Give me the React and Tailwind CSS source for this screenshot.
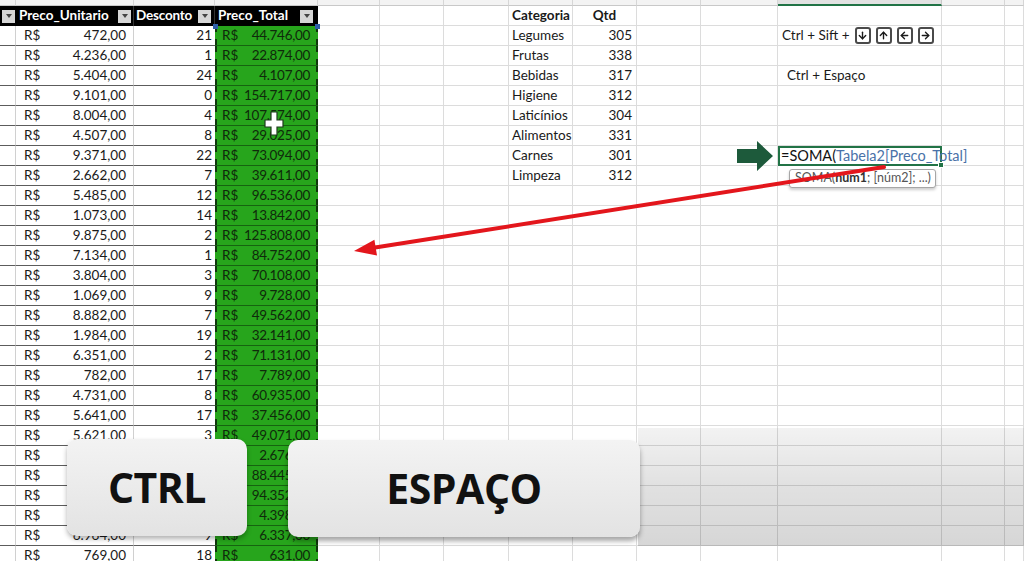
import React from "react";
import { ArrowDown, ArrowUp, ArrowLeft, ArrowRight } from "lucide-react";

const COLS =
  "grid grid-cols-[16px_118px_81px_103px_62px_64px_65px_64px_64px_64px_77px_164px_63px_19px] h-[20px]";

const rows = [
  ["472,00", "21", "44.746,00"],
  ["4.236,00", "1", "22.874,00"],
  ["5.404,00", "24", "4.107,00"],
  ["9.101,00", "0", "154.717,00"],
  ["8.004,00", "4", "107.574,00"],
  ["4.507,00", "8", "29.025,00"],
  ["9.371,00", "22", "73.094,00"],
  ["2.662,00", "7", "39.611,00"],
  ["5.485,00", "12", "96.536,00"],
  ["1.073,00", "14", "13.842,00"],
  ["9.875,00", "2", "125.808,00"],
  ["7.134,00", "1", "84.752,00"],
  ["3.804,00", "3", "70.108,00"],
  ["1.069,00", "9", "9.728,00"],
  ["8.882,00", "7", "49.562,00"],
  ["1.984,00", "19", "32.141,00"],
  ["6.351,00", "2", "71.131,00"],
  ["782,00", "17", "7.789,00"],
  ["4.731,00", "8", "60.935,00"],
  ["5.641,00", "17", "37.456,00"],
  ["5.621,00", "3", "49.071,00"],
  ["8.920,00", "11", "2.676,00"],
  ["3.358,00", "6", "88.445,00"],
  ["7.412,00", "13", "94.352,00"],
  ["2.107,00", "5", "4.398,00"],
  ["6.964,00", "9", "6.337,00"],
  ["769,00", "18", "631,00"],
];

const cats = [
  ["Legumes", "305"],
  ["Frutas", "338"],
  ["Bebidas", "317"],
  ["Higiene", "312"],
  ["Laticínios", "304"],
  ["Alimentos", "331"],
  ["Carnes", "301"],
  ["Limpeza", "312"],
];

const grid = "border-r border-b border-[#dcdcdc]";

function Filter() {
  return (
    <span className="w-[13px] h-[13px] bg-[#d6d6d6] flex items-center justify-center shrink-0">
      <span className="w-0 h-0 border-x-[3px] border-x-transparent border-t-[4px] border-t-[#444]" />
    </span>
  );
}

function Key({ children }) {
  return (
    <span className="w-[16px] h-[17px] rounded-[3px] border-2 border-[#4a4a4a] flex items-center justify-center text-[#1a1a1a]">
      {children}
    </span>
  );
}

function RightCells({ r }) {
  const cat = r === 0 ? ["Categoria", "Qtd"] : cats[r - 1];
  let lCell = null;
  if (r === 1) {
    lCell = (
      <div className={`${grid} flex items-center gap-[5px] pl-[4px] whitespace-nowrap`}>
        <span>Ctrl + Sift +</span>
        <Key><ArrowDown size={11} strokeWidth={3} /></Key>
        <Key><ArrowUp size={11} strokeWidth={3} /></Key>
        <Key><ArrowLeft size={11} strokeWidth={3} /></Key>
        <Key><ArrowRight size={11} strokeWidth={3} /></Key>
      </div>
    );
  } else if (r === 3) {
    lCell = <div className={`${grid} flex items-center pl-[9px]`}>Ctrl + Espaço</div>;
  } else if (r === 7) {
    lCell = (
      <div className="relative z-10 border-2 border-[#217346] flex items-center pl-[1px] whitespace-nowrap text-[14.5px]">
        <span className="text-[#111]">=SOMA(</span>
        <span className="text-[#4a72a8]">Tabela2[Preco_Total]</span>
        <span className="w-px h-[16px] bg-[#222] ml-[2px]" />
        <span className="absolute right-[-4px] bottom-[-4px] w-[6px] h-[6px] bg-[#217346] border border-white" />
      </div>
    );
  } else {
    lCell = <div className={grid} />;
  }
  return (
    <>
      <div className={grid} />
      <div className={grid} />
      <div className={grid} />
      {cat ? (
        <div className={`${grid} flex items-center pl-[3px] overflow-hidden whitespace-nowrap ${r === 0 ? "font-bold" : ""}`}>
          {cat[0]}
        </div>
      ) : (
        <div className={grid} />
      )}
      {cat ? (
        <div className={`${grid} flex items-center ${r === 0 ? "justify-center font-bold" : "justify-end pr-[4px]"}`}>
          {cat[1]}
        </div>
      ) : (
        <div className={grid} />
      )}
      <div className={grid} />
      <div className={grid} />
      {lCell}
      <div className={grid} />
      <div className={grid} />
    </>
  );
}

function HeaderRow() {
  return (
    <div className={COLS}>
      <div className="bg-black flex items-center justify-end pr-[1px]">
        <Filter />
      </div>
      <div className="bg-black text-white font-bold flex items-center justify-between pl-[3px] pr-[2px] border-r border-[#333]">
        <span>Preco_Unitario</span>
        <Filter />
      </div>
      <div className="bg-black text-white font-bold flex items-center justify-between pl-[2px] pr-[3px] border-r border-[#333]">
        <span className="tracking-[-0.2px]">Desconto</span>
        <Filter />
      </div>
      <div className="relative bg-black text-white font-bold flex items-center justify-between pl-[3px] pr-[5px]">
        <span>Preco_Total</span>
        <Filter />
        <span className="absolute left-[-2px] bottom-[-3px] w-[5px] h-[5px] bg-[#2f5fa8]" />
        <span className="absolute right-[-2px] bottom-[-3px] w-[5px] h-[5px] bg-[#2f5fa8]" />
      </div>
      <RightCells r={0} />
    </div>
  );
}

function DataRow({ r, d }) {
  return (
    <div className={COLS}>
      <div className="border-b border-[#5c5c5c] border-r border-r-[#d0d0d0]" />
      <div className="border-b border-[#5c5c5c] border-r border-r-[#d0d0d0] flex items-center justify-between pl-[8px] pr-[7px]">
        <span>R$</span>
        <span>{d[0]}</span>
      </div>
      <div className="border-b border-[#5c5c5c] flex items-center justify-end pr-[3px]">{d[1]}</div>
      <div className="bg-[#27a51c] border-b border-[#166410]">
        <div className="h-full border-x-2 border-dashed border-[#10360c] flex items-center justify-between pl-[5px] pr-[6px] text-[#0f2a0b]">
          <span>R$</span>
          <span className="tracking-[-0.3px]">{d[2]}</span>
        </div>
      </div>
      <RightCells r={r} />
    </div>
  );
}

export default function App() {
  return (
    <div className="relative w-[1024px] h-[561px] overflow-hidden bg-white text-[13.5px] leading-none text-[#1a1a1a] font-['Lato',sans-serif]">
      {/* column letters strip */}
      <div className="grid grid-cols-[16px_118px_81px_103px_62px_64px_65px_64px_64px_64px_77px_164px_63px_19px] h-[6px] bg-[#f3f3f3]">
        {Array.from({ length: 14 }).map((_, i) => (
          <div
            key={i}
            className={
              i === 11
                ? "bg-[#e2e2e2] border-b-2 border-[#217346] border-r border-r-[#c8c8c8]"
                : "border-b border-[#c8c8c8] border-r border-r-[#d6d6d6]"
            }
          />
        ))}
      </div>

      <HeaderRow />
      {rows.map((d, i) => (
        <DataRow key={i} r={i + 1} d={d} />
      ))}

      {/* move cursor */}
      <svg className="absolute left-[264px] top-[111px]" width="20" height="25" viewBox="0 0 20 25">
        <path d="M7 1h6v8h6v7h-6v8H7v-8H1V9h6z" fill="#fff" stroke="#1f3b1c" strokeWidth="1.2" />
      </svg>

      {/* function tooltip */}
      <div className="absolute left-[789px] top-[169px] w-[147px] h-[19px] rounded-[3px] border border-[#a6a6a6] bg-white shadow-[0_2px_3px_rgba(0,0,0,0.2)] flex items-center pl-[5px] text-[12.5px] text-[#555] whitespace-nowrap z-20">
        SOMA(<b className="text-[#333]">núm1</b>; [núm2]; ...)
      </div>

      {/* green arrow */}
      <svg className="absolute left-[737px] top-[141px] z-20" width="36" height="30" viewBox="0 0 36 30">
        <path d="M0 8h20V0l16 15-16 15v-8H0z" fill="#1d5a3b" />
      </svg>

      {/* red arrow */}
      <svg className="absolute left-0 top-0 z-30 pointer-events-none" width="1024" height="561">
        <line x1="884" y1="167" x2="372" y2="248" stroke="#e3161c" strokeWidth="4" strokeLinecap="round" />
        <polygon points="354,251 377,255.5 374.4,239.7" fill="#e3161c" />
      </svg>

      {/* grey band right of keys */}
      <div className="absolute left-[638px] top-[428px] w-[386px] h-[118px] bg-gradient-to-b from-black/[0.05] via-black/[0.12] to-black/[0.16] z-30" />

      {/* CTRL key */}
      <div className="absolute left-[67px] top-[439px] w-[180px] h-[97px] rounded-[10px] bg-gradient-to-b from-[#f3f3f3] to-[#e3e3e3] shadow-[0_3px_5px_rgba(0,0,0,0.3)] z-40 flex items-center justify-center font-['Open_Sans',sans-serif] font-bold text-[41px] text-[#111] tracking-[-0.5px]">
        CTRL
      </div>

      {/* ESPAÇO key */}
      <div className="absolute left-[288px] top-[440px] w-[352px] h-[97px] rounded-[10px] bg-gradient-to-b from-[#f3f3f3] to-[#e3e3e3] shadow-[0_4px_5px_rgba(0,0,0,0.35)] z-40 flex items-center justify-center font-['Open_Sans',sans-serif] font-bold text-[41px] text-[#111] tracking-[-0.5px]">
        ESPAÇO
      </div>
    </div>
  );
}
